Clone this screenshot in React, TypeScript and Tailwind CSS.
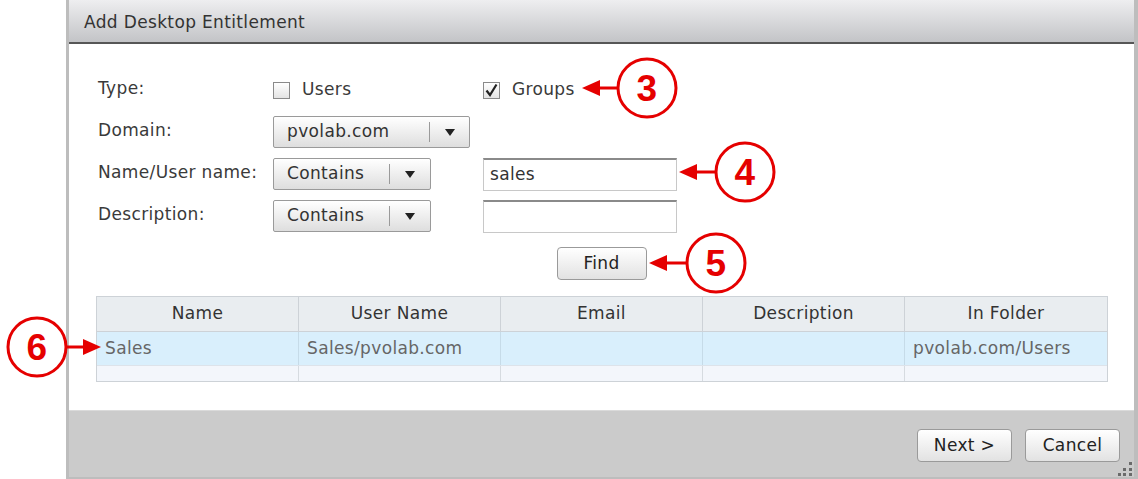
import React from 'react';

const font = { fontFamily: '"DejaVu Sans", Verdana, sans-serif' };

const Checkbox: React.FC<{ checked?: boolean; label: string }> = ({ checked, label }) => (
  <div className="flex items-center gap-[12px]">
    <div className="w-[17px] h-[17px] border border-[#8a8a8a] bg-gradient-to-b from-white to-[#e4e4e4] flex items-center justify-center">
      {checked && (
        <svg width="15" height="15" viewBox="0 0 15 15">
          <path d="M2.5 7.5 L6 12 L12.5 1.5" fill="none" stroke="#222" strokeWidth="2.2" />
        </svg>
      )}
    </div>
    <span className="text-[#3a3a3a]">{label}</span>
  </div>
);

const Select: React.FC<{ value: string; width: string; divider: string }> = ({ value, width, divider }) => (
  <div
    className={`${width} h-[32px] border border-[#9a9a9a] rounded-[2px] bg-gradient-to-b from-white to-[#dedede] flex items-center text-[#333]`}
  >
    <span className={`pl-[13px] ${divider}`}>{value}</span>
    <div className="w-px h-[20px] bg-[#9a9a9a]" />
    <div className="flex-1 flex justify-center">
      <svg width="10" height="7" viewBox="0 0 10 7">
        <path d="M0 0 H10 L5 7 Z" fill="#222" />
      </svg>
    </div>
  </div>
);

const Input: React.FC<{ value?: string }> = ({ value }) => (
  <div className="w-[194px] h-[33px] border border-[#c8c8c8] border-t-[#8a8a8a] border-t-2 bg-white flex items-center pl-[6px] text-[#333]">
    {value}
  </div>
);

const Button: React.FC<{ label: string; w: string }> = ({ label, w }) => (
  <div
    className={`${w} h-[33px] border border-[#9a9a9a] rounded-[4px] bg-gradient-to-b from-white to-[#e2e2e2] flex items-center justify-center text-[#222]`}
  >
    {label}
  </div>
);

const cols = ['Name', 'User Name', 'Email', 'Description', 'In Folder'];
const row = ['Sales', 'Sales/pvolab.com', '', '', 'pvolab.com/Users'];

const Annotations: React.FC = () => {
  const red = '#e50000';
  const circle = (cx: number, cy: number, n: string) => (
    <g key={n}>
      <circle cx={cx} cy={cy} r={29} fill="white" stroke={red} strokeWidth={3} />
      <text
        x={cx}
        y={cy + 13}
        textAnchor="middle"
        fontSize="37"
        fontWeight="700"
        fill={red}
        fontFamily='"Liberation Sans", Arial, sans-serif'
      >
        {n}
      </text>
    </g>
  );
  const leftArrow = (tip: number, end: number, y: number) => (
    <g>
      <line x1={tip + 15} y1={y} x2={end} y2={y} stroke={red} strokeWidth={3} />
      <path d={`M${tip} ${y} L${tip + 18} ${y - 8} L${tip + 18} ${y + 8} Z`} fill={red} />
    </g>
  );
  return (
    <svg className="absolute inset-0 pointer-events-none" width="1138" height="479" viewBox="0 0 1138 479">
      {leftArrow(582, 619, 88)}
      {circle(647, 88, '3')}
      {leftArrow(679, 717, 172)}
      {circle(745, 172, '4')}
      {leftArrow(649, 688, 263)}
      {circle(716, 263, '5')}
      <line x1={66} y1={347} x2={86} y2={347} stroke={red} strokeWidth={3} />
      <path d="M101 347 L83 339 L83 355 Z" fill={red} />
      {circle(37, 347, '6')}
    </svg>
  );
};

const App: React.FC = () => {
  return (
    <div className="relative w-[1138px] h-[479px] bg-white overflow-hidden text-[17px] tracking-[0.35px]" style={font}>
      <div className="ml-[66px] w-[1072px] h-[479px] border-l-[3px] border-r-[4px] border-b-[2px] border-[#bdbdbd] flex flex-col">
        {/* header */}
        <div className="h-[44px] bg-gradient-to-b from-[#eeeef0] to-[#c3c4c7] border-b-2 border-[#565656] flex items-center pt-[3px] pl-[15px] text-[#333]">
          Add Desktop Entitlement
        </div>

        {/* body */}
        <div className="flex-1 bg-white pt-[25px]">
          <div className="pl-[29px]">
            <div className="h-[42px] flex items-center">
              <div className="w-[175px] -mt-[2px] text-[#3a3a3a]">Type:</div>
              <div className="w-[210px]">
                <Checkbox label="Users" />
              </div>
              <Checkbox checked label="Groups" />
            </div>
            <div className="h-[42px] flex items-center">
              <div className="w-[175px] -mt-[2px] text-[#3a3a3a]">Domain:</div>
              <Select value="pvolab.com" width="w-[197px]" divider="w-[155px]" />
            </div>
            <div className="h-[42px] flex items-center">
              <div className="w-[175px] -mt-[2px] text-[#3a3a3a]">Name/User name:</div>
              <div className="w-[210px]">
                <Select value="Contains" width="w-[158px]" divider="w-[115px]" />
              </div>
              <Input value="sales" />
            </div>
            <div className="h-[42px] flex items-center">
              <div className="w-[175px] -mt-[2px] text-[#3a3a3a]">Description:</div>
              <div className="w-[210px]">
                <Select value="Contains" width="w-[158px]" divider="w-[115px]" />
              </div>
              <Input />
            </div>
          </div>

          <div className="mt-[10px] flex justify-center">
            <Button label="Find" w="w-[90px]" />
          </div>

          {/* table */}
          <div className="ml-[27px] mt-[16px] w-[1012px] border border-[#cdd2d7]">
            <div className="grid grid-cols-5 h-[34px] bg-[#e9edf0] text-[#333]">
              {cols.map((c, i) => (
                <div
                  key={c}
                  className={`flex items-center justify-center ${i < 4 ? 'border-r border-[#cdd2d7]' : ''}`}
                >
                  {c}
                </div>
              ))}
            </div>
            <div className="grid grid-cols-5 h-[34px] bg-[#d9effc] border-t border-[#cdd2d7] text-[#666]">
              {row.map((c, i) => (
                <div
                  key={i}
                  className={`flex items-center pl-[8px] ${i < 4 ? 'border-r border-[#c6dbe8]' : ''}`}
                >
                  {c}
                </div>
              ))}
            </div>
            <div className="grid grid-cols-5 h-[16px] bg-[#f3f6fb] border-t border-[#dde3ea]">
              {row.map((_, i) => (
                <div key={i} className={i < 4 ? 'border-r border-[#d6dbe0]' : ''} />
              ))}
            </div>
          </div>
        </div>

        {/* footer */}
        <div className="relative h-[67px] bg-[#cbcbcb] border-t border-[#dadada] flex items-start justify-end gap-[13px] pt-[18px] pr-[14px]">
          <Button label="Next >" w="w-[95px]" />
          <Button label="Cancel" w="w-[95px]" />
          <svg className="absolute right-[1px] bottom-[1px]" width="16" height="16" viewBox="0 0 16 16">
            {[
              [12, 2],
              [6, 8],
              [12, 8],
              [1, 13],
              [6, 13],
              [12, 13],
            ].map(([x, y], i) => (
              <rect key={i} x={x} y={y} width="3" height="3" fill="#6a6a6a" />
            ))}
          </svg>
        </div>
      </div>
      <Annotations />
    </div>
  );
};

export default App;
